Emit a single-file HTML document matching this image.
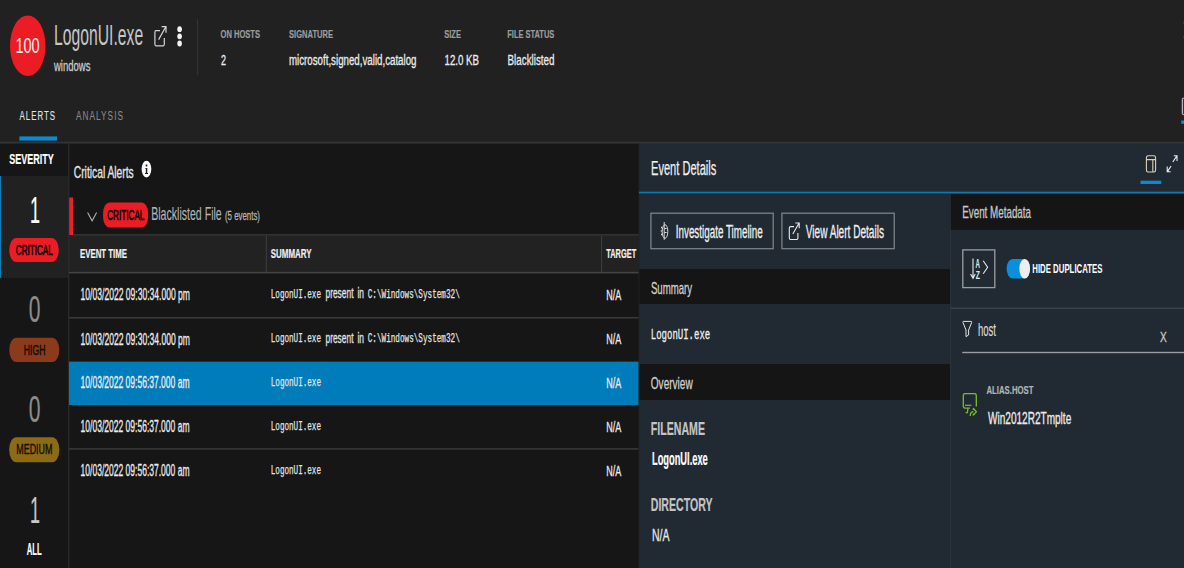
<!DOCTYPE html>
<html lang="en"><head><meta charset="utf-8"><title>LogonUI.exe - Alerts</title>
<style>
html,body{margin:0;padding:0;background:#212121;}
body{width:1184px;height:568px;overflow:hidden;position:relative;font-family:"Liberation Sans", sans-serif;}
#bg div{position:absolute;}
svg{position:absolute;left:0;top:0;}
text.s{font-family:"Liberation Sans", sans-serif;}
text.m{font-family:"Liberation Mono", monospace;}
</style></head><body>
<div id="bg">
<div style="left:0px;top:143px;width:639px;height:425px;background:#161616;"></div>
<div style="left:0px;top:176px;width:68px;height:101.5px;background:#212121;"></div>
<div style="left:0px;top:176px;width:1px;height:102px;background:#0b7fb5;"></div>
<div style="left:69px;top:235px;width:570px;height:37px;background:#232222;"></div>
<div style="left:639px;top:143px;width:545px;height:425px;background:#212a32;"></div>
<div style="left:639px;top:268.75px;width:311.5px;height:35.25px;background:#151515;"></div>
<div style="left:639px;top:364px;width:311.5px;height:36.25px;background:#151515;"></div>
<div style="left:950.5px;top:193.5px;width:233.5px;height:36.0px;background:#151515;"></div>
</div>
<svg width="1184" height="568" viewBox="0 0 1184 568">
<rect x="0" y="141.8" width="1184" height="1.7" fill="#343434"/>
<rect x="68.2" y="143.5" width="1.1" height="424.5" fill="#2e2e2e"/>
<rect x="69.2" y="197.5" width="3.9" height="37.5" fill="#e8212b"/>
<rect x="73.5" y="234.2" width="565.5" height="1.2" fill="#3a3a3a"/>
<rect x="69" y="271.9" width="570" height="1.5" fill="#444444"/>
<rect x="265.8" y="235.4" width="1.1" height="36.6" fill="#3c3c3c"/>
<rect x="601" y="235.4" width="1.1" height="36.6" fill="#3c3c3c"/>
<rect x="69" y="316.9" width="570" height="1.7" fill="#383838"/>
<rect x="69" y="361.6" width="570" height="43.5" fill="#007cbb"/>
<rect x="69" y="448.1" width="570" height="1.6" fill="#383838"/>
<rect x="638.4" y="143.5" width="1.0" height="424.5" fill="#1f2429"/>
<rect x="639" y="191.7" width="545" height="1.7" fill="#0a79b4"/>
<rect x="950" y="229.5" width="1.2" height="338.5" fill="#2a3138"/>
<rect x="950.5" y="307.6" width="233.5" height="1.3" fill="#3d464d"/>
<rect x="962.2" y="351.8" width="221.8" height="1.4" fill="#9a9ea2"/>
<rect x="19.4" y="136.4" width="37.6" height="4.2" fill="#0a8bd0"/>
<rect x="1140.5" y="180.7" width="20.75" height="3.3" fill="#0a8bd0"/>
<rect x="650.9" y="213.2" width="122.3" height="35.5" fill="none" stroke="#7f858a" stroke-width="1.25"/>
<rect x="781.9" y="213.2" width="112.3" height="35.5" fill="none" stroke="#7f858a" stroke-width="1.25"/>
<rect x="962.8" y="249.9" width="32.0" height="37.7" fill="none" stroke="#9a9ea2" stroke-width="1.3"/>
<ellipse cx="27.75" cy="45.8" rx="17.75" ry="30.3" fill="#ec1c24"/>
<rect x="197" y="19" width="1" height="56" fill="#333"/>
<rect x="9.25" y="238" width="49.5" height="24" rx="7" ry="12" fill="#ec1c24"/>
<rect x="9.25" y="337.75" width="50" height="24.25" rx="7" ry="12" fill="#8c3a1c"/>
<rect x="9.25" y="437.25" width="50" height="25" rx="7" ry="12" fill="#8c6a16"/>
<ellipse cx="146.45" cy="169.1" rx="4.85" ry="8.3" fill="#fff"/>
<path d="M145.4 168 H147.3 V173 H148 V174 H145 V173 H145.8 V169 H145.4 Z M145.7 164.4 H147.3 V166.6 H145.7 Z" fill="#222"/>
<polyline points="87.6,212.6 92.1,220.8 96.6,212.6" fill="none" stroke="#b0b0b0" stroke-width="1.1"/>
<rect x="103.1" y="202.5" width="45" height="25" rx="6.5" ry="10.5" fill="#ec1c24"/>
<g fill="none" stroke="#d4d4d4" stroke-width="1.2"><path d="M160 30.6 H156 Q154.9 30.6 154.9 32.4 V44 Q154.9 45.8 156 45.8 H163.2 Q164.3 45.8 164.3 44 V38"/><path d="M158.6 39.6 L165.8 26.8 M161.6 26.6 H166 V32.8"/></g>
<ellipse cx="179.6" cy="29.2" rx="2.3" ry="2.9" fill="#f4f4f4"/>
<ellipse cx="179.6" cy="36.3" rx="2.3" ry="2.9" fill="#f4f4f4"/>
<ellipse cx="179.6" cy="43.5" rx="2.3" ry="2.9" fill="#f4f4f4"/>
<g fill="none" stroke="#e8e8e8" stroke-width="1.1"><path d="M794 226.6 H790.4 Q789.3 226.6 789.3 228.3 V237.8 Q789.3 239.5 790.4 239.5 H796.8 Q797.9 239.5 797.9 237.8 V233"/><path d="M792.8 234 L799 223.2 M795.4 223 H799.2 V228.2"/></g>
<g fill="none" stroke="#d8d8d8" stroke-width="1"><ellipse cx="665" cy="231.5" rx="2.8" ry="6.8"/><path d="M664.2 222 V239.8"/><path d="M661 227.5 h1 M660.8 231 h1 M661 234.5 h1" stroke-width="1.4"/><path d="M664.2 228.5 h2.4 M664.2 232.5 h2.4"/></g>
<g fill="none" stroke="#ddd0b0" stroke-width="1.1"><rect x="1146.4" y="155.8" width="9.2" height="16.2" rx="1.6" ry="2.4"/><path d="M1146.4 159.6 H1155.6 M1152.8 159.6 V172"/></g>
<g fill="none" stroke="#ececec" stroke-width="1.1"><path d="M1172.8 162 L1176.6 156.4 M1173.8 155.8 H1177 V161 M1171 166 L1167.6 171.4 M1167.2 166.4 V171.8 H1170.6"/></g>
<g fill="none" stroke="#e8e8e8" stroke-width="1.1"><path d="M973 258.5 V278 M970.6 274 L973 278.3 L975.2 274"/><path d="M983.2 260.8 L987.6 267.2 L983.2 273.8"/></g>
<rect x="1006.6" y="259" width="23.4" height="19.5" rx="6" ry="9.75" fill="#0a8fdc"/>
<ellipse cx="1024.7" cy="268.75" rx="5.4" ry="9.75" fill="#eeeeee"/>
<path d="M963.4 321.4 H971.2 Q972 321.4 971.6 322.6 L968.6 330 V335 L966 336.6 V330 L963 322.6 Q962.6 321.4 963.4 321.4 Z" fill="none" stroke="#e4e4e4" stroke-width="1"/>
<g fill="none" stroke="#7aba32" stroke-width="1.3"><path d="M970 408.2 H964.8 Q963.3 408.2 963.3 405.8 V396 Q963.3 393.6 964.8 393.6 H974.8 Q976.3 393.6 976.3 396 V406.5"/><path d="M965 405.3 H971.5" stroke-width="1.2"/><path d="M965.6 412.6 H967.4 L968 408.4"/><path d="M970.2 416 Q970.4 411.6 973.4 411.6 M973.2 408.2 L976.4 411.8 L973.2 415.4 M973.3 408.2 V410 M973.3 413.6 V415.4"/></g>
<rect x="1182.3" y="98.2" width="4" height="16.4" rx="1" fill="#5a2222" stroke="#d8d8e8" stroke-width="1"/><rect x="1183.2" y="21" width="1" height="3" fill="#2c3c4c"/><rect x="1183.2" y="35.5" width="1" height="3" fill="#2c3c4c"/>
<rect x="1181.2" y="120.5" width="3" height="3.3" fill="#0a8bd0"/>
<text class="s" x="15.4" y="53" font-size="22.6" fill="#fbecec" textLength="24.2" lengthAdjust="spacingAndGlyphs">100</text>
<text class="s" x="54" y="44.5" font-size="28.6" fill="#c6c6c6" textLength="89.2" lengthAdjust="spacingAndGlyphs">LogonUI.exe</text>
<text class="s" x="54" y="71.3" font-size="14" fill="#c8c8c8" stroke="#c8c8c8" stroke-width="0.3" textLength="36.5" lengthAdjust="spacingAndGlyphs">windows</text>
<text class="s" x="220.5" y="38" font-size="11.6" fill="#9c9c9c" stroke="#9c9c9c" stroke-width="0.2" font-weight="700" textLength="39.5" lengthAdjust="spacingAndGlyphs">ON HOSTS</text>
<text class="s" x="221" y="64.6" font-size="15.3" fill="#ececec" stroke="#ececec" stroke-width="0.3" textLength="5" lengthAdjust="spacingAndGlyphs">2</text>
<text class="s" x="289" y="38" font-size="11.6" fill="#9c9c9c" stroke="#9c9c9c" stroke-width="0.2" font-weight="700" textLength="44" lengthAdjust="spacingAndGlyphs">SIGNATURE</text>
<text class="s" x="289" y="64.6" font-size="15.3" fill="#ececec" stroke="#ececec" stroke-width="0.3" textLength="127.5" lengthAdjust="spacingAndGlyphs">microsoft,signed,valid,catalog</text>
<text class="s" x="444.25" y="38" font-size="11.6" fill="#9c9c9c" stroke="#9c9c9c" stroke-width="0.2" font-weight="700" textLength="16.75" lengthAdjust="spacingAndGlyphs">SIZE</text>
<text class="s" x="444.5" y="64.6" font-size="15.3" fill="#ececec" stroke="#ececec" stroke-width="0.3" textLength="34.5" lengthAdjust="spacingAndGlyphs">12.0 KB</text>
<text class="s" x="507.25" y="38" font-size="11.6" fill="#9c9c9c" stroke="#9c9c9c" stroke-width="0.2" font-weight="700" textLength="47.0" lengthAdjust="spacingAndGlyphs">FILE STATUS</text>
<text class="s" x="507.5" y="64.6" font-size="15.3" fill="#ececec" stroke="#ececec" stroke-width="0.3" textLength="47.0" lengthAdjust="spacingAndGlyphs">Blacklisted</text>
<text class="s" x="19.5" y="119.6" font-size="12" fill="#e4e4e4" stroke="#e4e4e4" stroke-width="0.1" letter-spacing="1.5" textLength="36.5" lengthAdjust="spacingAndGlyphs">ALERTS</text>
<text class="s" x="76" y="119.6" font-size="12" fill="#8a8a8a" stroke="#8a8a8a" stroke-width="0.1" letter-spacing="1.5" textLength="48" lengthAdjust="spacingAndGlyphs">ANALYSIS</text>
<text class="s" x="9.25" y="164" font-size="14.8" fill="#fff" stroke="#fff" stroke-width="0.2" font-weight="700" textLength="44.5" lengthAdjust="spacingAndGlyphs">SEVERITY</text>
<text class="s" x="30" y="222.8" font-size="36.4" fill="#fff" stroke="#fff" stroke-width="0.2" textLength="10" lengthAdjust="spacingAndGlyphs">1</text>
<text class="s" x="15.8" y="255" font-size="14.6" fill="#0a0000" stroke="#0a0000" stroke-width="0.6" textLength="37.0" lengthAdjust="spacingAndGlyphs">CRITICAL</text>
<text class="s" x="28.75" y="322.3" font-size="36.4" fill="#8c8c8c" stroke="#8c8c8c" stroke-width="0.2" textLength="11.75" lengthAdjust="spacingAndGlyphs">0</text>
<text class="s" x="23.75" y="355.25" font-size="14.6" fill="#140804" stroke="#140804" stroke-width="0.4" textLength="21.75" lengthAdjust="spacingAndGlyphs">HIGH</text>
<text class="s" x="28.75" y="421.8" font-size="36.4" fill="#8c8c8c" stroke="#8c8c8c" stroke-width="0.2" textLength="11.75" lengthAdjust="spacingAndGlyphs">0</text>
<text class="s" x="16.25" y="454" font-size="14.2" fill="#141004" stroke="#141004" stroke-width="0.4" textLength="36.25" lengthAdjust="spacingAndGlyphs">MEDIUM</text>
<text class="s" x="30" y="522.8" font-size="36.4" fill="#c8c8c8" stroke="#c8c8c8" stroke-width="0.2" textLength="10" lengthAdjust="spacingAndGlyphs">1</text>
<text class="s" x="26.75" y="554.6" font-size="15.6" fill="#fff" stroke="#fff" stroke-width="0.2" font-weight="700" textLength="15.0" lengthAdjust="spacingAndGlyphs">ALL</text>
<text class="s" x="73.75" y="178.25" font-size="16.8" fill="#e8e8e8" stroke="#e8e8e8" stroke-width="0.3" textLength="60.0" lengthAdjust="spacingAndGlyphs">Critical Alerts</text>
<text class="s" x="107.2" y="219.6" font-size="14.4" fill="#0a0000" stroke="#0a0000" stroke-width="0.6" textLength="37.2" lengthAdjust="spacingAndGlyphs">CRITICAL</text>
<text class="s" x="151.2" y="219.9" font-size="19.2" fill="#b4b4b4" stroke="#b4b4b4" stroke-width="0.1" textLength="70.55" lengthAdjust="spacingAndGlyphs">Blacklisted File</text>
<text class="s" x="225" y="219.8" font-size="13.6" fill="#b4b4b4" stroke="#b4b4b4" stroke-width="0.3" textLength="35" lengthAdjust="spacingAndGlyphs">(5 events)</text>
<text class="s" x="80" y="258.25" font-size="12.2" fill="#f0f0f0" stroke="#f0f0f0" stroke-width="0.2" font-weight="700" textLength="47" lengthAdjust="spacingAndGlyphs">EVENT TIME</text>
<text class="s" x="270.75" y="258.25" font-size="12.2" fill="#f0f0f0" stroke="#f0f0f0" stroke-width="0.2" font-weight="700" textLength="40.75" lengthAdjust="spacingAndGlyphs">SUMMARY</text>
<text class="s" x="606.25" y="258.25" font-size="12.2" fill="#f0f0f0" stroke="#f0f0f0" stroke-width="0.2" font-weight="700" textLength="30.0" lengthAdjust="spacingAndGlyphs">TARGET</text>
<text class="s" x="80.6" y="300.25" font-size="15.6" fill="#ececec" stroke="#ececec" stroke-width="0.3" textLength="109.4" lengthAdjust="spacingAndGlyphs">10/03/2022 09:30:34.000 pm</text>
<text class="m" x="270.75" y="297.95" font-size="13.2" fill="#e4e4e4" stroke="#e4e4e4" stroke-width="0.25" textLength="50.25" lengthAdjust="spacingAndGlyphs">LogonUI.exe</text>
<text class="s" x="325.5" y="298.05" font-size="15" fill="#e4e4e4" stroke="#e4e4e4" stroke-width="0.3" textLength="38.5" lengthAdjust="spacingAndGlyphs" word-spacing="3">present in</text>
<text class="m" x="367.75" y="297.95" font-size="13.2" fill="#e4e4e4" stroke="#e4e4e4" stroke-width="0.25" textLength="92.0" lengthAdjust="spacingAndGlyphs">C:\Windows\System32\</text>
<text class="s" x="606.25" y="299.95" font-size="14.6" fill="#ececec" stroke="#ececec" stroke-width="0.3" textLength="15.0" lengthAdjust="spacingAndGlyphs">N/A</text>
<text class="s" x="80.6" y="344.75" font-size="15.6" fill="#ececec" stroke="#ececec" stroke-width="0.3" textLength="109.4" lengthAdjust="spacingAndGlyphs">10/03/2022 09:30:34.000 pm</text>
<text class="m" x="270.75" y="342.45" font-size="13.2" fill="#e4e4e4" stroke="#e4e4e4" stroke-width="0.25" textLength="50.25" lengthAdjust="spacingAndGlyphs">LogonUI.exe</text>
<text class="s" x="325.5" y="342.55" font-size="15" fill="#e4e4e4" stroke="#e4e4e4" stroke-width="0.3" textLength="38.5" lengthAdjust="spacingAndGlyphs" word-spacing="3">present in</text>
<text class="m" x="367.75" y="342.45" font-size="13.2" fill="#e4e4e4" stroke="#e4e4e4" stroke-width="0.25" textLength="92.0" lengthAdjust="spacingAndGlyphs">C:\Windows\System32\</text>
<text class="s" x="606.25" y="344.45" font-size="14.6" fill="#ececec" stroke="#ececec" stroke-width="0.3" textLength="15.0" lengthAdjust="spacingAndGlyphs">N/A</text>
<text class="s" x="80.6" y="387.9" font-size="15.6" fill="#ececec" stroke="#ececec" stroke-width="0.3" textLength="108.9" lengthAdjust="spacingAndGlyphs">10/03/2022 09:56:37.000 am</text>
<text class="m" x="270.75" y="385.59999999999997" font-size="13.2" fill="#e4e4e4" stroke="#e4e4e4" stroke-width="0.25" textLength="50.25" lengthAdjust="spacingAndGlyphs">LogonUI.exe</text>
<text class="s" x="606.25" y="387.59999999999997" font-size="14.6" fill="#ececec" stroke="#ececec" stroke-width="0.3" textLength="15.0" lengthAdjust="spacingAndGlyphs">N/A</text>
<text class="s" x="80.6" y="432" font-size="15.6" fill="#ececec" stroke="#ececec" stroke-width="0.3" textLength="108.9" lengthAdjust="spacingAndGlyphs">10/03/2022 09:56:37.000 am</text>
<text class="m" x="270.75" y="429.7" font-size="13.2" fill="#e4e4e4" stroke="#e4e4e4" stroke-width="0.25" textLength="50.25" lengthAdjust="spacingAndGlyphs">LogonUI.exe</text>
<text class="s" x="606.25" y="431.7" font-size="14.6" fill="#ececec" stroke="#ececec" stroke-width="0.3" textLength="15.0" lengthAdjust="spacingAndGlyphs">N/A</text>
<text class="s" x="80.6" y="475.8" font-size="15.6" fill="#ececec" stroke="#ececec" stroke-width="0.3" textLength="108.9" lengthAdjust="spacingAndGlyphs">10/03/2022 09:56:37.000 am</text>
<text class="m" x="270.75" y="473.5" font-size="13.2" fill="#e4e4e4" stroke="#e4e4e4" stroke-width="0.25" textLength="50.25" lengthAdjust="spacingAndGlyphs">LogonUI.exe</text>
<text class="s" x="606.25" y="475.5" font-size="14.6" fill="#ececec" stroke="#ececec" stroke-width="0.3" textLength="15.0" lengthAdjust="spacingAndGlyphs">N/A</text>
<text class="s" x="651" y="174.7" font-size="19.3" fill="#f0f0f0" stroke="#f0f0f0" stroke-width="0.25" textLength="65.25" lengthAdjust="spacingAndGlyphs">Event Details</text>
<text class="s" x="675.75" y="238.25" font-size="18" fill="#f0f0f0" stroke="#f0f0f0" stroke-width="0.3" textLength="87.0" lengthAdjust="spacingAndGlyphs">Investigate Timeline</text>
<text class="s" x="805.75" y="238.25" font-size="18" fill="#f0f0f0" stroke="#f0f0f0" stroke-width="0.3" textLength="78.25" lengthAdjust="spacingAndGlyphs">View Alert Details</text>
<text class="s" x="650.9" y="293.75" font-size="16.4" fill="#d0d0d0" stroke="#d0d0d0" stroke-width="0.3" textLength="41.2" lengthAdjust="spacingAndGlyphs">Summary</text>
<text class="m" x="650.75" y="338.7" font-size="15.5" fill="#f0f0f0" stroke="#f0f0f0" stroke-width="0.3" textLength="59.5" lengthAdjust="spacingAndGlyphs">LogonUI.exe</text>
<text class="s" x="650.75" y="389" font-size="16" fill="#d0d0d0" stroke="#d0d0d0" stroke-width="0.3" textLength="42.0" lengthAdjust="spacingAndGlyphs">Overview</text>
<text class="s" x="650.75" y="435" font-size="17.5" fill="#c4c4c4" stroke="#c4c4c4" stroke-width="0.2" font-weight="700" textLength="54.25" lengthAdjust="spacingAndGlyphs">FILENAME</text>
<text class="s" x="652" y="464.75" font-size="17.5" fill="#fff" stroke="#fff" stroke-width="0.2" font-weight="700" textLength="55.75" lengthAdjust="spacingAndGlyphs">LogonUI.exe</text>
<text class="s" x="650.75" y="511" font-size="17.5" fill="#c4c4c4" stroke="#c4c4c4" stroke-width="0.2" font-weight="700" textLength="61.75" lengthAdjust="spacingAndGlyphs">DIRECTORY</text>
<text class="s" x="652" y="540.5" font-size="16.6" fill="#e8e8e8" stroke="#e8e8e8" stroke-width="0.3" textLength="17.5" lengthAdjust="spacingAndGlyphs">N/A</text>
<text class="s" x="962.25" y="218.25" font-size="16.4" fill="#c8c8c8" stroke="#c8c8c8" stroke-width="0.3" textLength="68.75" lengthAdjust="spacingAndGlyphs">Event Metadata</text>
<text class="s" x="1032.25" y="272.8" font-size="12" fill="#fff" font-weight="700" textLength="70.25" lengthAdjust="spacingAndGlyphs">HIDE DUPLICATES</text>
<text class="s" x="978" y="335.9" font-size="18" fill="#dcdcdc" stroke="#dcdcdc" stroke-width="0.15" textLength="18" lengthAdjust="spacingAndGlyphs">host</text>
<text class="s" x="1160" y="342" font-size="14.7" fill="#c8c8c8" stroke="#c8c8c8" stroke-width="0.3" textLength="6.75" lengthAdjust="spacingAndGlyphs">X</text>
<text class="s" x="986.5" y="394" font-size="11.6" fill="#b4b4b4" stroke="#b4b4b4" stroke-width="0.2" font-weight="700" textLength="46.9" lengthAdjust="spacingAndGlyphs">ALIAS.HOST</text>
<text class="s" x="988" y="424" font-size="16.4" fill="#ececec" stroke="#ececec" stroke-width="0.3" textLength="83.25" lengthAdjust="spacingAndGlyphs">Win2012R2Tmplte</text>
<text class="s" x="975.6" y="268" font-size="12" fill="#e8e8e8" font-weight="700" textLength="4.4" lengthAdjust="spacingAndGlyphs">A</text>
<text class="s" x="975.8" y="279" font-size="11.6" fill="#e8e8e8" font-weight="700" textLength="4.2" lengthAdjust="spacingAndGlyphs">Z</text>
</svg>
</body></html>
